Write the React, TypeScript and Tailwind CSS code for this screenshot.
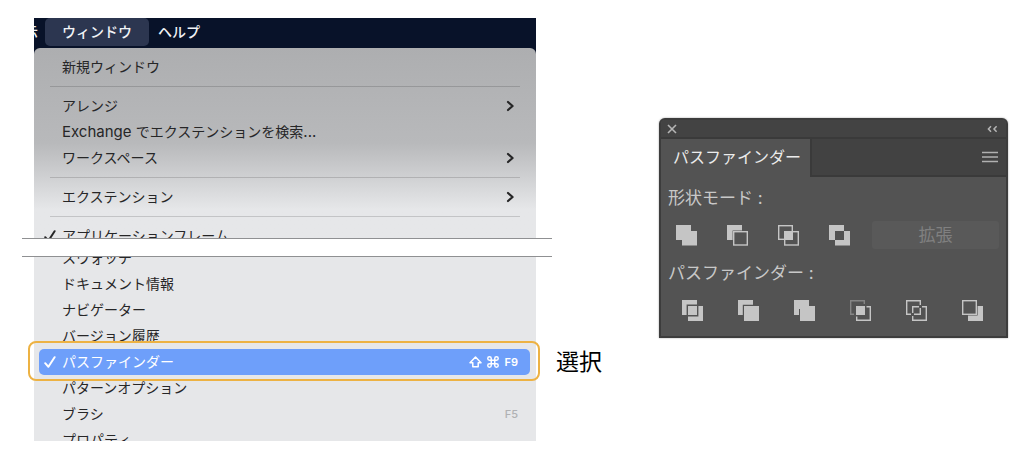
import type { ReactNode } from "react";

const CheckMark = () => (
  <svg className="size-3" viewBox="0 0 12 12" fill="none" stroke="currentColor" strokeWidth="2" strokeLinecap="round" strokeLinejoin="round" aria-hidden="true">
    <path d="M1.2 7.2 4.4 10.8 10.6 1.2" />
  </svg>
);

const Chevron = () => (
  <svg className="mr-1 h-3 w-2" viewBox="0 0 8 12" fill="none" stroke="currentColor" strokeWidth="2.2" strokeLinecap="round" strokeLinejoin="round" aria-hidden="true">
    <path d="M2 2 6.6 6 2 10" />
  </svg>
);

const ShiftKey = () => (
  <svg className="h-3 w-[13px]" viewBox="0 0 13 12" fill="none" stroke="currentColor" strokeWidth="1.5" strokeLinejoin="round" aria-hidden="true">
    <path d="M6.5 1 12 6.7H9.2V10.8H3.8V6.7H1Z" />
  </svg>
);

const CommandKey = () => (
  <svg className="size-[14px]" viewBox="0 0 24 24" fill="none" stroke="currentColor" strokeWidth="2.5" strokeLinecap="round" strokeLinejoin="round" aria-hidden="true">
    <path d="M15 6v12a3 3 0 1 0 3-3H6a3 3 0 1 0 3 3V6a3 3 0 1 0-3 3h12a3 3 0 1 0-3-3" />
  </svg>
);

type RowProps = {
  label: ReactNode;
  className?: string;
  checked?: boolean;
  submenu?: boolean;
  selected?: boolean;
  shortcut?: ReactNode;
};

function MenuRow({ label, className = "", checked, submenu, selected, shortcut }: RowProps) {
  return (
    <li role="none" className={"relative shrink-0 pl-[5px] pr-[6px] " + className}>
      <button
        type="button"
        role="menuitem"
        className={
          "flex h-[26px] w-full items-center rounded-[5px] pl-[5px] pr-3 text-left text-[14px] leading-[26px] " +
          (selected ? "bg-[#6e9ffa] text-white" : "text-[#262627]")
        }
      >
        <span className="flex w-[18px] shrink-0 items-center">{checked && <CheckMark />}</span>
        <span className="grow whitespace-nowrap">{label}</span>
        {submenu && <Chevron />}
        {shortcut}
      </button>
      {selected && <span className="pointer-events-none absolute -bottom-[6px] -left-[6px] -right-1 -top-2 z-10 rounded-lg border-2 border-[#edb243]" />}
    </li>
  );
}

const Separator = () => <li role="separator" className="mx-4 my-[6px] h-px shrink-0 bg-black/15" />;

function Glyph({ children }: { children: ReactNode }) {
  return (
    <svg className="size-[21px]" viewBox="0 0 21 21" fill="#c5c5c5" aria-hidden="true">
      {children}
    </svg>
  );
}

const outline = { fill: "none", stroke: "#c5c5c5", strokeWidth: 1.4 };

const shapeModes: { name: string; art: ReactNode }[] = [
  { name: "合体", art: <path d="M0 0H15V6H21V20.5H6V15H0Z" /> },
  {
    name: "前面オブジェクトで型抜き",
    art: (
      <>
        <path d="M0 0H15V5.6H5.6V15H0Z" />
        <rect x="6.7" y="6.7" width="13.6" height="13.3" {...outline} />
      </>
    ),
  },
  {
    name: "交差",
    art: (
      <>
        <rect x=".7" y=".7" width="13.6" height="13.6" {...outline} />
        <rect x="6.7" y="6.7" width="13.6" height="13.3" {...outline} />
        <path d="M6 6H15V15H6Z" />
      </>
    ),
  },
  { name: "中マド", art: <path fillRule="evenodd" d="M0 0H15V6H21V20.5H6V15H0ZM6 6V15H15V6Z" /> },
];

const pathfinders: { name: string; art: ReactNode }[] = [
  {
    name: "分割",
    art: (
      <>
        <path d="M0 0H15V4.6H4.6V15H0Z" />
        <path d="M6 6H15V15H6Z" />
        <path d="M16.4 6H21V21H6V16.4H16.4Z" />
      </>
    ),
  },
  {
    name: "刈り込み",
    art: (
      <>
        <path d="M0 0H15V4.8H4.8V15H0Z" />
        <path d="M6 6H21V21H6Z" />
      </>
    ),
  },
  { name: "合流", art: <path d="M0 0H15V6H21V21H6V9H5V15H0Z" /> },
  {
    name: "切り抜き",
    art: (
      <>
        <path d="M14.3 4V.7H.7V14.3H4" fill="none" stroke="#858585" strokeWidth="1.4" />
        <path d="M6 6H15V15H6Z" />
        <path d="M16.5 6.7H20.3V20.3H6.7V16.5" {...outline} />
      </>
    ),
  },
  {
    name: "アウトライン",
    art: (
      <>
        <path d="M14.3 5V.7H.7V14.3H5" {...outline} />
        <path d="M6.7 13V6.7H13M8 14.3H14.3V8" {...outline} />
        <path d="M16 6.7H20.3V20.3H6.7V16" {...outline} />
      </>
    ),
  },
  {
    name: "背面オブジェクトで型抜き",
    art: (
      <>
        <path d="M15.6 6H21V21H6V15.6H15.6Z" />
        <rect x=".7" y=".7" width="13.6" height="13.6" {...outline} />
      </>
    ),
  },
];

function WindowMenu() {
  return (
    <section className="min-w-0 flex-1" aria-label="ウィンドウメニュー">
      <div className="ml-3 mr-4 bg-[#081229]">
        <nav className="flex h-[30px] items-start overflow-hidden text-[14px] font-medium leading-7 text-[#f1f3f6]">
          <span className="-ml-[10px] mr-[7px] shrink-0">示</span>
          <button type="button" className="shrink-0 rounded-[5px] bg-[#2c3650] px-[17px]">ウィンドウ</button>
          <button type="button" className="shrink-0 px-[9px]">ヘルプ</button>
        </nav>
        <ul
          role="menu"
          className="flex flex-col overflow-y-clip rounded-t-md bg-linear-to-b from-[#adaeb0] via-[#b8b9bb] via-50% to-[#e6e7e9] to-85% pt-[6px]"
        >
          <MenuRow label="新規ウィンドウ" />
          <Separator />
          <MenuRow label="アレンジ" submenu />
          <MenuRow
            label={
              <>
                <span className="text-[15px]">Exchange </span>でエクステンションを検索<span className="text-[15px]">...</span>
              </>
            }
          />
          <MenuRow label="ワークスペース" submenu />
          <Separator />
          <MenuRow label="エクステンション" submenu />
          <Separator />
          <MenuRow label="アプリケーションフレーム" checked className="-mb-[11px]" />
        </ul>
      </div>
      <div className="h-[19px] border-y border-[#8f9092] bg-white" />
      <ul role="menu" className="ml-3 mr-4 flex flex-col overflow-y-clip bg-[#e6e7e9]">
        <MenuRow label="スウォッチ" className="-mt-3" />
        <MenuRow label="ドキュメント情報" />
        <MenuRow label="ナビゲーター" />
        <MenuRow label="バージョン履歴" />
        <MenuRow
          label="パスファインダー"
          checked
          selected
          shortcut={
            <span className="flex items-center gap-1 text-[11px] font-semibold">
              <ShiftKey />
              <CommandKey />
              <span>F9</span>
            </span>
          }
        />
        <MenuRow label="パターンオプション" />
        <MenuRow label="ブラシ" shortcut={<span className="text-[11px] font-medium text-[#b0b1b3]">F5</span>} />
        <MenuRow label="プロパティ" className="-mb-3" />
      </ul>
    </section>
  );
}

function PathfinderPanel() {
  return (
    <section
      aria-label="パスファインダー"
      className="mt-[100px] w-[349px] shrink-0 overflow-hidden rounded-t-md border-2 border-[#3c3c3c] bg-[#535353] text-[#c8c8c8] shadow-[0_0_2px_rgba(0,0,0,0.4)]"
    >
      <header className="flex h-[17px] items-center justify-between bg-[#434343] pl-[6px] pr-2">
        <button type="button" aria-label="閉じる">
          <svg className="size-[10px]" viewBox="0 0 10 10" fill="none" stroke="#b5b5b5" strokeWidth="1.6" aria-hidden="true">
            <path d="M1 1 9 9M9 1 1 9" />
          </svg>
        </button>
        <button type="button" aria-label="折りたたむ">
          <svg className="h-2 w-3" viewBox="0 0 12 8" fill="none" stroke="#b5b5b5" strokeWidth="1.5" aria-hidden="true">
            <path d="M5 1.2 2.4 4 5 6.8M10.6 1.2 8 4 10.6 6.8" />
          </svg>
        </button>
      </header>
      <div className="flex h-10 border-t-2 border-[#3a3a3a] bg-[#424242]">
        <button type="button" className="bg-[#535353] pb-[2px] pl-3 pr-[9px] text-[16px] text-[#ececec]">パスファインダー</button>
        <div className="flex grow items-center justify-end border-b-2 border-l-2 border-[#3a3a3a] pr-2">
          <button type="button" aria-label="パネルメニュー">
            <svg className="h-3 w-4" viewBox="0 0 16 12" stroke="#b0b0b0" strokeWidth="1.4" aria-hidden="true">
              <path d="M0 1.5H16M0 6H16M0 10.5H16" />
            </svg>
          </button>
        </div>
      </div>
      <div className="pb-[15px] pl-[7px] pr-[7px] pt-[9px]">
        <h2 className="text-[17px] leading-6">形状モード<span className="font-[Inter]"> :</span></h2>
        <div className="mt-[11px] flex h-7 items-center pl-2">
          <div className="flex gap-[30px]">
            {shapeModes.map((m) => (
              <button key={m.name} type="button" aria-label={m.name}>
                <Glyph>{m.art}</Glyph>
              </button>
            ))}
          </div>
          <button type="button" disabled className="ml-[22px] h-7 grow rounded-[3px] bg-[#595959] text-[17px] leading-7 text-[#808080]">
            拡張
          </button>
        </div>
        <h2 className="mt-3 text-[17px] leading-6">パスファインダー<span className="font-[Inter]"> :</span></h2>
        <div className="mt-[15px] flex gap-[35px] pl-[14px]">
          {pathfinders.map((m) => (
            <button key={m.name} type="button" aria-label={m.name}>
              <Glyph>{m.art}</Glyph>
            </button>
          ))}
        </div>
      </div>
    </section>
  );
}

export default function App() {
  return (
    <main className="flex min-h-screen items-start bg-white pb-[10px] pl-[22px] pr-4 pt-[18px] font-[Inter,'Noto_Sans_CJK_JP',sans-serif]">
      <WindowMenu />
      <p className="ml-1 mr-[57px] mt-[326px] shrink-0 text-[23px] leading-9 text-black">選択</p>
      <PathfinderPanel />
    </main>
  );
}
